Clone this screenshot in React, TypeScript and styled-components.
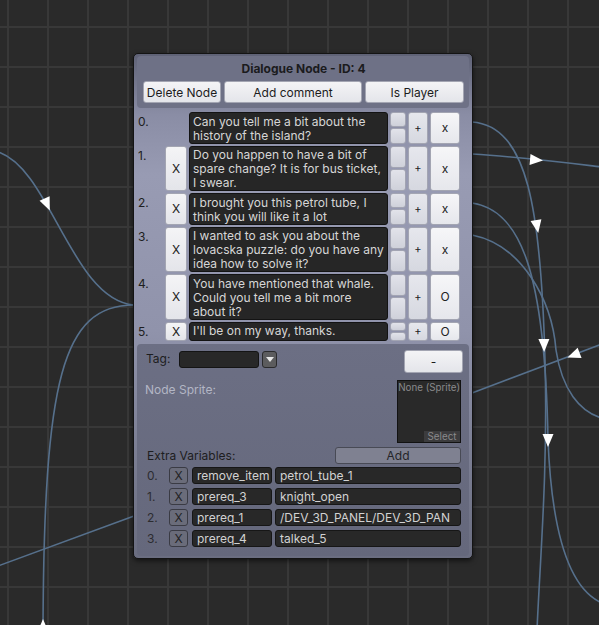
import React from "react";
import styled, { createGlobalStyle } from "styled-components";

const GlobalStyle = createGlobalStyle`
  html, body { margin: 0; padding: 0; background: #2a2a2a; }
  body { font-family: Inter, "Noto Sans", "Liberation Sans", sans-serif; }
  * { box-sizing: border-box; }
`;

const Canvas = styled.div`
  position: relative;
  width: 599px;
  height: 625px;
  overflow: hidden;
  background-color: #2a2a2a;
  background-image:
    linear-gradient(to right, #383838 0, #383838 2px, transparent 2px),
    linear-gradient(to bottom, #383838 0, #383838 2px, transparent 2px);
  background-size: 40px 40px;
  background-position: 7px 26px;
`;

const EdgeLayer = styled.svg`
  position: absolute;
  left: 0;
  top: 0;
  width: 599px;
  height: 625px;
`;

const Node = styled.div`
  position: absolute;
  left: 133px;
  top: 53px;
  width: 340px;
  height: 506px;
  border: 1px solid #141414;
  border-radius: 5px;
  padding: 2px 3px 2px;
  background: linear-gradient(
    180deg,
    #5f6276 0%,
    #8a8da5 12%,
    #989bb3 24%,
    #9093ab 55%,
    #7c7f94 78%,
    #6a6d80 100%
  );
  box-shadow: 0 2px 5px rgba(0, 0, 0, 0.55);
  display: flex;
  flex-direction: column;
`;

const Header = styled.div`
  background: #6e7186;
  border-radius: 4px;
  padding: 5px 5px 5px 6px;
  display: flex;
  flex-direction: column;
  gap: 4px;
`;

const Title = styled.div`
  height: 16px;
  line-height: 16px;
  text-align: center;
  font-weight: 700;
  font-size: 12px;
  color: #1b1b1d;
`;

const ButtonRow = styled.div`
  display: flex;
  gap: 3px;
`;

const LightButton = styled.div<{ $w?: number; $h?: number; $fs?: number }>`
  width: ${(p) => (p.$w ? `${p.$w}px` : "auto")};
  height: ${(p) => (p.$h ? `${p.$h}px` : "auto")};
  display: flex;
  align-items: center;
  justify-content: center;
  background: linear-gradient(180deg, #f4f4f6 0%, #e4e5ea 100%);
  border: 1px solid #a3a5b2;
  border-radius: 3px;
  color: #1c1c1c;
  font-size: ${(p) => p.$fs ?? 12}px;
  white-space: nowrap;
`;

const Answers = styled.div`
  margin-top: 4px;
  display: flex;
  flex-direction: column;
  gap: 2px;
`;

const AnswerRow = styled.div`
  display: grid;
  grid-template-columns: 26px 22px 199px 16px 20px 30px;
  column-gap: 2px;
  align-items: stretch;
`;

const RowIndex = styled.div`
  padding: 2px 0 0 1px;
  font-size: 12px;
  line-height: 15px;
  color: #1e1e20;
`;

const TextBox = styled.div`
  background: #262626;
  border: 1px solid #131313;
  border-radius: 3px;
  padding: 1.5px 3px 0;
  min-height: 19px;
  font-size: 12px;
  line-height: 14px;
  color: #d6d6d6;
  white-space: pre;
  overflow: hidden;
`;

const MoveStack = styled.div`
  display: flex;
  flex-direction: column;
  gap: 1px;
`;

const MoveButton = styled.div`
  flex: 1;
  background: linear-gradient(180deg, #e2e3ea 0%, #cfd1da 100%);
  border: 1px solid #a2a4b2;
  border-radius: 3px;
`;

const SideButton = styled.div<{ $tone: "plus" | "end" }>`
  display: flex;
  align-items: center;
  justify-content: center;
  background: ${(p) =>
    p.$tone === "plus"
      ? "linear-gradient(180deg, #e6e7ed 0%, #d6d8e0 100%)"
      : "linear-gradient(180deg, #f6f6f8 0%, #e6e7ec 100%)"};
  border: 1px solid #a3a5b2;
  border-radius: 3px;
  color: #222;
  font-size: ${(p) => (p.$tone === "plus" ? 11 : 12)}px;
`;

const Lower = styled.div`
  flex: 1;
  margin-top: 3px;
  background: linear-gradient(180deg, #6c6f84 0%, #65687c 100%);
  border-radius: 4px;
  padding: 6px 8px 6px 9px;
  display: flex;
  flex-direction: column;
`;

const TagRow = styled.div`
  height: 23px;
  display: flex;
  align-items: flex-start;
`;

const Label = styled.div<{ $muted?: boolean }>`
  font-size: 12px;
  line-height: 15px;
  color: ${(p) => (p.$muted ? "#b3b6c5" : "#1d1d20")};
`;

const TagLabel = styled(Label)`
  width: 33px;
  padding-top: 1px;
`;

const DarkField = styled.div<{ $w: number }>`
  width: ${(p) => p.$w}px;
  height: 17px;
  background: #282828;
  border: 1px solid #141414;
  border-radius: 3px;
  margin-top: 1px;
`;

const DropButton = styled.div`
  width: 15px;
  height: 17px;
  margin: 1px 0 0 3px;
  background: #5c5c5e;
  border: 1px solid #2a2a2c;
  border-radius: 3px;
  display: flex;
  align-items: center;
  justify-content: center;
`;

const DropArrow = styled.div`
  width: 0;
  height: 0;
  border-left: 4px solid transparent;
  border-right: 4px solid transparent;
  border-top: 5px solid #e8e8e8;
`;

const Spacer = styled.div`
  flex: 1;
`;

const MinusButton = styled(LightButton)`
  margin-right: -2px;
`;

const SpriteRow = styled.div`
  margin-top: 7px;
  display: flex;
  justify-content: space-between;
`;

const SpriteLabel = styled(Label)`
  padding-top: 2px;
  margin-left: -1px;
`;

const SpriteBox = styled.div`
  width: 64px;
  height: 63px;
  background: #292929;
  border: 1px solid #121212;
  display: flex;
  flex-direction: column;
  justify-content: space-between;
  align-items: flex-end;
`;

const SpriteName = styled.div`
  font-size: 9.8px;
  line-height: 13px;
  color: #8a8a8c;
  white-space: nowrap;
`;

const SelectTab = styled.div`
  width: 36px;
  height: 11px;
  background: #3c3c3e;
  color: #8a8a8c;
  font-size: 9.8px;
  line-height: 11px;
  text-align: center;
`;

const ExtraRow = styled.div`
  margin-top: 4px;
  height: 17px;
  display: flex;
  justify-content: space-between;
`;

const ExtraLabel = styled(Label)`
  margin-left: 1px;
  padding-top: 1px;
`;

const AddButton = styled.div`
  width: 126px;
  height: 17px;
  background: #7f8191;
  border: 1px solid #484a55;
  border-radius: 3px;
  display: flex;
  align-items: center;
  justify-content: center;
  font-size: 12px;
  color: #252528;
`;

const VarList = styled.div`
  margin-top: 3px;
  display: flex;
  flex-direction: column;
  gap: 4px;
`;

const VarRow = styled.div`
  display: grid;
  grid-template-columns: 23px 19px 84px 189px;
  height: 17px;
`;

const VarIndex = styled.div`
  padding-left: 1px;
  font-size: 12px;
  line-height: 17px;
  color: #2c2c30;
`;

const VarDelete = styled.div`
  background: #6a6c7a;
  border: 1px solid #3a3b44;
  border-radius: 3px;
  display: flex;
  align-items: center;
  justify-content: center;
  font-size: 12px;
  color: #232326;
`;

const VarField = styled.div<{ $gap: number }>`
  margin-left: ${(p) => p.$gap}px;
  background: #282828;
  border: 1px solid #161616;
  border-radius: 3px;
  padding-left: 4px;
  font-size: 12px;
  line-height: 15px;
  color: #d2d2d2;
  white-space: nowrap;
  overflow: hidden;
`;

type Answer = { lines: string[]; del: boolean; end: string };

const answers: Answer[] = [
  { lines: ["Can you tell me a bit about the", "history of the island?"], del: false, end: "x" },
  {
    lines: ["Do you happen to have a bit of", "spare change? It is for bus ticket,", "I swear."],
    del: true,
    end: "x",
  },
  { lines: ["I brought you this petrol tube, I", "think you will like it a lot"], del: true, end: "x" },
  {
    lines: ["I wanted to ask you about the", "lovacska puzzle: do you have any", "idea how to solve it?"],
    del: true,
    end: "x",
  },
  {
    lines: ["You have mentioned that whale.", "Could you tell me a bit more", "about it?"],
    del: true,
    end: "O",
  },
  { lines: ["I'll be on my way, thanks."], del: true, end: "O" },
];

const variables = [
  ["remove_item", "petrol_tube_1"],
  ["prereq_3", "knight_open"],
  ["prereq_1", "/DEV_3D_PANEL/DEV_3D_PAN"],
  ["prereq_4", "talked_5"],
];

const Arrow = ({ x, y, a }: { x: number; y: number; a: number }) => (
  <polygon points="7,0 -6,-5.5 -6,5.5" fill="#ffffff" transform={`translate(${x} ${y}) rotate(${a})`} />
);

const Edges = () => (
  <EdgeLayer viewBox="0 0 599 625">
    <g fill="none" stroke="#56708c" strokeWidth={1.6}>
      <path d="M -2 152 C 50 168, 72 300, 134 305" />
      <path d="M 134 305 C 62 305, 44 380, 43 630" />
      <path d="M -2 566 L 134 516" />
      <path d="M 472 122 C 528 126, 541 210, 545 360 C 548 470, 540 560, 537 630" />
      <path d="M 472 154 C 520 157, 560 162, 602 167" />
      <path d="M 472 203 C 520 210, 545 270, 548 440 C 552 540, 572 590, 602 603" />
      <path d="M 472 235 C 522 245, 552 300, 556 350 C 562 390, 580 412, 602 418" />
      <path d="M 472 393 L 602 344" />
    </g>
    <Arrow x={47} y={204} a={66} />
    <Arrow x={43} y={626} a={-90} />
    <Arrow x={536} y={160} a={5} />
    <Arrow x={537} y={226} a={80} />
    <Arrow x={544} y={345} a={89} />
    <Arrow x={548} y={440} a={90} />
    <Arrow x={574} y={355} a={159} />
  </EdgeLayer>
);

export default function App() {
  return (
    <>
      <GlobalStyle />
      <Canvas>
        <Edges />
        <Node>
          <Header>
            <Title>Dialogue Node - ID: 4</Title>
            <ButtonRow>
              <LightButton $w={78} $h={22}>Delete Node</LightButton>
              <LightButton $w={138} $h={22}>Add comment</LightButton>
              <LightButton $w={99} $h={22}>Is Player</LightButton>
            </ButtonRow>
          </Header>

          <Answers>
            {answers.map((a, i) => (
              <AnswerRow key={i}>
                <RowIndex>{i}.</RowIndex>
                {a.del ? <LightButton>X</LightButton> : <div />}
                <TextBox>{a.lines.join("\n")}</TextBox>
                <MoveStack>
                  <MoveButton />
                  <MoveButton />
                </MoveStack>
                <SideButton $tone="plus">+</SideButton>
                <SideButton $tone="end">{a.end}</SideButton>
              </AnswerRow>
            ))}
          </Answers>

          <Lower>
            <TagRow>
              <TagLabel>Tag:</TagLabel>
              <DarkField $w={80} />
              <DropButton>
                <DropArrow />
              </DropButton>
              <Spacer />
              <MinusButton $w={59} $h={23}>-</MinusButton>
            </TagRow>

            <SpriteRow>
              <SpriteLabel $muted>Node Sprite:</SpriteLabel>
              <SpriteBox>
                <SpriteName>None (Sprite)</SpriteName>
                <SelectTab>Select</SelectTab>
              </SpriteBox>
            </SpriteRow>

            <ExtraRow>
              <ExtraLabel>Extra Variables:</ExtraLabel>
              <AddButton>Add</AddButton>
            </ExtraRow>

            <VarList>
              {variables.map(([name, value], i) => (
                <VarRow key={i}>
                  <VarIndex>{i}.</VarIndex>
                  <VarDelete>X</VarDelete>
                  <VarField $gap={4}>{name}</VarField>
                  <VarField $gap={3}>{value}</VarField>
                </VarRow>
              ))}
            </VarList>
          </Lower>
        </Node>
      </Canvas>
    </>
  );
}
